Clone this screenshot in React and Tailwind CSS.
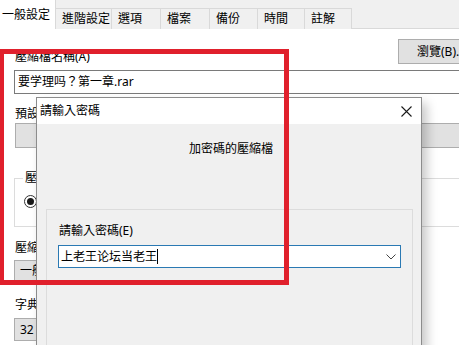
import React from 'react';

const tabs = [
    { label: '一般設定', w: 'w-[56px]', active: true },
    { label: '進階設定', w: 'w-[56px]' },
    { label: '選項', w: 'w-[49px]' },
    { label: '檔案', w: 'w-[49px]' },
    { label: '備份', w: 'w-[48px]' },
    { label: '時間', w: 'w-[47px]' },
    { label: '註解', w: 'w-[47px]' },
];

const PasswordDialog = () => (
    <div className="absolute left-[36px] top-[97px] w-[386px] h-[270px] border border-[#8c8c8c] bg-[#f0f0f0] shadow-[5px_6px_10px_rgba(0,0,0,0.22)] flex flex-col">
        <div className="h-[26px] bg-white flex items-center">
            <span className="pl-[3px] leading-4">請輸入密碼</span>
            <svg className="ml-auto mr-[9px]" width="11" height="11" viewBox="0 0 11 11">
                <path d="M0.5 0.5 L10.5 10.5 M10.5 0.5 L0.5 10.5" stroke="#1a1a1a" strokeWidth="1.1" fill="none" />
            </svg>
        </div>
        <div className="pt-[17px] pl-[4px] text-center leading-4">加密碼的壓縮檔</div>
        <div className="mt-[52px] ml-[9px] mr-[8px] flex-1 border border-[#dcdcdc] flex flex-col">
            <div className="pt-[13px] pl-[12px] leading-4">請輸入密碼(E)</div>
            <div className="mt-[6px] ml-[11px] mr-[11px] h-[23px] bg-white border border-[#2a79b3] flex items-center">
                <span className="pl-[2px] leading-4">上老王论坛当老王</span>
                <span className="w-px h-[15px] bg-black" />
                <svg className="ml-auto mr-[4px]" width="10" height="6" viewBox="0 0 10 6">
                    <path d="M0.5 0.5 L5 5 L9.5 0.5" stroke="#444" strokeWidth="1" fill="none" />
                </svg>
            </div>
        </div>
    </div>
);

const App = () => {
    return (
        <div className="relative w-[459px] h-[345px] overflow-hidden bg-white text-[12px] text-black font-['Noto_Sans','Noto_Sans_CJK_TC',sans-serif]">
            {/* tab strip */}
            <div className="flex h-[29px] bg-[#f0f0f0] border-b border-[#d9d9d9]">
                {tabs.map((t) =>
                    t.active ? (
                        <div key={t.label} className={`${t.w} h-[29px] bg-white border-r border-[#d9d9d9] pl-[2px] pt-[7px] leading-4`}>
                            {t.label}
                        </div>
                    ) : (
                        <div key={t.label} className={`${t.w} mt-[8px] h-[21px] bg-[#f0f0f0] border-t border-r border-[#d9d9d9] pl-[6px] pt-[2px] leading-4`}>
                            {t.label}
                        </div>
                    )
                )}
            </div>

            {/* general page */}
            <div className="pl-[14px] w-[520px] flex flex-col">
                <div className="flex h-[35px]">
                    <div className="w-[384px] shrink-0 pt-[20px] pl-px leading-4">壓縮檔名稱(A)</div>
                    <div className="mt-[10px] w-[80px] h-[25px] bg-[#e1e1e1] border border-[#adadad] pl-[18px] flex items-center leading-4">瀏覽(B)...</div>
                </div>
                <div className="mt-[6px] h-[24px] border border-[#7a7a7a] flex items-center pl-[3px] leading-4">要学理吗？第一章.rar</div>
                <div className="mt-[12px] pl-px leading-4">預設</div>
                <div className="mt-px ml-px h-[25px] bg-[#e1e1e1] border border-[#adadad]" />
                <div className="relative mt-[30px] h-[49px] border border-[#dcdcdc]">
                    <span className="absolute left-[8px] -top-[9px] bg-white px-[2px] leading-4">壓縮方式</span>
                    <div className="ml-[9px] mt-[16px] w-[13px] h-[13px] rounded-full border border-[#333] bg-white flex items-center justify-center">
                        <div className="w-[7px] h-[7px] rounded-full bg-[#1a1a1a]" />
                    </div>
                </div>
                <div className="mt-[13px] pl-px leading-4">壓縮方式(C)</div>
                <div className="mt-[4px] w-[120px] h-[21px] bg-[#e1e1e1] border border-[#adadad] pl-[5px] flex items-center leading-4">一般</div>
                <div className="mt-[16px] pl-px leading-4">字典大小(I)</div>
                <div className="mt-[5px] w-[120px] h-[23px] bg-[#e1e1e1] border border-[#adadad] pl-[5px] flex items-center leading-4">32 MB</div>
            </div>

            <PasswordDialog />

            {/* annotation */}
            <div className="absolute left-[-1px] top-[49px] w-[290px] h-[236px] border-[5px] border-[#e0202c]" />
        </div>
    );
};

export default App;
